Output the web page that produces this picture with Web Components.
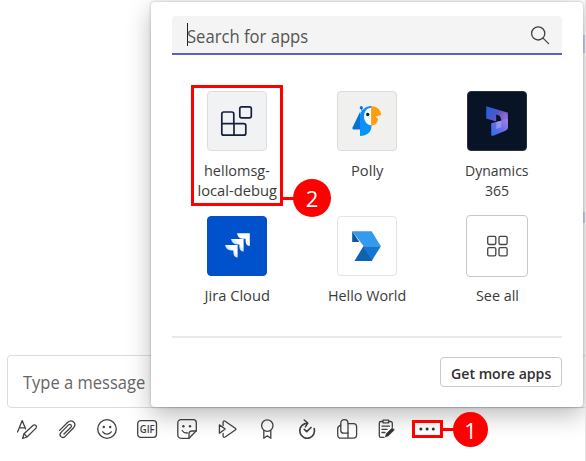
<!DOCTYPE html>
<html lang="en">
<head>
<meta charset="utf-8">
<title>Message extensions</title>
<style>
html,body{margin:0;width:586px;height:461px;overflow:hidden;background:#fff;font-family:"Open Sans","Noto Sans",sans-serif;color:#333}
</style>
</head>
<body>
<teams-window></teams-window>
<script>
const define = (name, html, ready) => customElements.define(name, class extends HTMLElement {
  constructor() {
    super();
    const t = document.createElement('template');
    t.innerHTML = html;
    this.attachShadow({mode: 'open'}).append(t.content.cloneNode(true));
  }
  connectedCallback() { if (ready) ready.call(this, this.shadowRoot); }
});

/* One line of text condensed or widened to the width in the w attribute. */
define('fit-text', `<style>
:host{display:block;white-space:nowrap;flex:none}
span{display:inline-block;transform-origin:0 50%}
</style><span><slot></slot></span>`, function (r) {
  const w = +this.getAttribute('w'), s = r.querySelector('span');
  this.style.width = w + 'px';
  s.style.transform = `scaleX(${w / s.offsetWidth})`;
});

const icons = {
  format: `<path d="M.6 13 5.2 1.6 8.6 10M2.3 8.8h5.2" /><path d="M5.6 19.5 7 14.8 16.2 6.3c2-1.3 4.2.8 2.8 2.8L10 18Z"/><path d="m7.3 15 2.4 2.6"/>`,
  clip: `<path d="M2.6 11.4 10.8 3.2c4-3.6 9.4 1.4 5.8 5.5l-8.5 8.7c-3 2.7-6.7-.8-4.2-3.8l7.6-7.7c1.8-1.5 4 .6 2.4 2.4L7 15"/>`,
  smile: `<circle cx="10" cy="10" r="9.3"/><g fill="#424242" stroke="none"><circle cx="6.8" cy="8" r="1.2"/><circle cx="13.2" cy="8" r="1.2"/></g><path d="M5.8 12.8c2.2 3 6.2 3 8.4 0"/>`,
  gif: `<rect x=".7" y="1.7" width="18.8" height="16.6" rx="3"/><text x="10.2" y="14" text-anchor="middle" textLength="15" lengthAdjust="spacingAndGlyphs" font-size="10.5" font-weight="600" fill="#424242" stroke="none">GIF</text>`,
  sticker: `<path d="M4 .7h12.3a3 3 0 0 1 3 3v8.1L12 19.3H4a3.2 3.2 0 0 1-3.2-3.2V4A3.2 3.2 0 0 1 4 .7Z"/><path d="M19.2 12h-4.5a2.7 2.7 0 0 0-2.7 2.7v4.5M5.2 11.5c1.2 2 3 2.8 5.3 2.4"/><g fill="#424242" stroke="none"><circle cx="6.4" cy="7.2" r="1.2"/><circle cx="13" cy="7.2" r="1.2"/></g>`,
  stream: `<path d="M6.1 3.2c0-1.2 1-1.6 2-1l10.2 7q1.3.9 0 1.8l-10.2 7c-1 .6-2 .2-2-1v-2.7M6.1 3.2v3.3"/><path d="M2.4 5.9 8.2 10l-5.8 4.2Z"/>`,
  praise: `<circle cx="10.3" cy="6.6" r="5.7"/><path d="M6.8 11.5v7.8l3.5-2.5 3.5 2.5v-7.8"/>`,
  update: `<path stroke-width="1.7" d="M15.6 6.4A7.2 7.2 0 1 0 17 11M2.8 11A7.2 7.2 0 0 1 8 4" stroke="none"/><path stroke-width="1.7" d="M17.2 9.6A7.4 7.4 0 1 1 7.5 4.9L9.6 4.3"/><path stroke-width="1.5" d="m7.2 1 3.6 3-2.4 3.9"/><path stroke-width="1.7" d="m7.3 10.4 2.4 2.2 4.3-4.1"/>`,
  viva: `<path d="M3.8 5.4v-1C3.8-.6 11 -.6 11 4.4v9.8H6.7c-1.9 0-2.9-1-2.9-2.8Z"/><path d="M3.8 6.2C1.6 7 .7 7.9.7 9.7v6c0 2.4 1 3.5 3.4 3.5h12.1c2.3 0 3.4-1.1 3.4-3.4V7.7c0-2.1-1-3.1-3.1-3.1H11M11 14v5.2"/>`,
  approvals: `<path d="M5.8 2.5H4A1.7 1.7 0 0 0 2.3 4.2v12.5A1.7 1.7 0 0 0 4 18.4h3M11.8 2.5h1.8a1.7 1.7 0 0 1 1.7 1.7v4M6 1.2h5.6v2.6H6ZM5 7.2h7.4M5 10.4h5M5 13.5h3"/><path fill="#333" stroke-width=".8" d="m8.5 17.6.9-3 5.9-5.7 2 2-5.9 5.8Z"/>`,
  more: `<g fill="#333" stroke="none"><circle cx="3.9" cy="10" r="1.5"/><circle cx="10.1" cy="10" r="1.5"/><circle cx="16.3" cy="10" r="1.5"/></g>`,
  search: `<circle cx="8.2" cy="8.4" r="6.6"/><path d="m13 13.1 5.6 5.5"/>`
};
icons.update = icons.update.slice(icons.update.indexOf('/>') + 2);
define('line-icon', `<style>
:host{display:block;width:20px;height:20px}
svg{display:block;overflow:visible;fill:none;stroke:#424242;stroke-width:1.3;stroke-linejoin:round;stroke-linecap:round}
</style><svg width="20" height="20" viewBox="0 0 20 20"></svg>`, function (r) {
  r.querySelector('svg').innerHTML = icons[this.getAttribute('name')];
});

define('search-field', `<style>
:host{display:flex;flex:none;align-items:center;box-sizing:border-box;height:39px;padding:3px 12px 0 15px;background:#f4f4f4;border-radius:4px 4px 0 0;border-bottom:2px solid #5b5fc7;color:#555;font-size:17.6px;line-height:24px}
i{width:1px;height:23px;background:#222;margin:-4px -1px 0 0}
line-icon{margin:-3px 0 0 auto}
</style><i></i><fit-text w="121"><slot></slot></fit-text><line-icon name="search"></line-icon>`);

define('app-tile', `<style>
:host{display:flex;flex-direction:column;align-items:center;height:125px;font-size:14.7px;line-height:20px;color:#3b3b3b}
div{box-sizing:border-box;width:60px;height:60px;border-radius:4px;border:1px solid var(--edge,transparent);background:var(--fill,#fff);display:flex;margin-bottom:9px}
:host([large]) div{width:62px;height:62px;margin:-1px 0 8px}
slot[name=art]::slotted(svg){display:block;margin:-1px;flex:none}
</style><div><slot name="art"></slot></div><slot></slot>`);

define('get-button', `<style>
:host{display:flex;flex:none;box-sizing:border-box;width:122px;height:30px;align-items:center;justify-content:center;border:1px solid #cacaca;border-radius:4px;font-size:14.7px;line-height:20px;font-weight:600;color:#303030;padding-top:1px}
</style><fit-text w="100"><slot></slot></fit-text>`);

define('app-flyout', `<style>
:host{display:flex;flex-direction:column;box-sizing:border-box;width:432px;height:405px;padding:14px 21px 20px;background:#fff;border-radius:4px;box-shadow:0 8px 24px rgba(0,0,0,.27),0 0 3px rgba(0,0,0,.25)}
section{display:grid;grid-template-columns:repeat(3,130px);height:240px;margin-top:36px}
hr{width:100%;height:2px;background:#e8e8e8;border:0;margin:auto 0 19px}
get-button{align-self:flex-end}
</style>
<search-field>Search for apps</search-field>
<section>
<app-tile style="--fill:#f1f2f4;--edge:#dedede"><svg slot="art" width="60" height="60" fill="none" stroke="#14213d" stroke-width="1.7"><path d="M16.8 21h8a2 2 0 0 1 2 2v9.7h10a2 2 0 0 1 2 2v7.5a2 2 0 0 1-2 2h-20a2 2 0 0 1-2-2V23a2 2 0 0 1 2-2ZM15 32.7h12v11.4"/><rect x="32.8" y="15.8" width="11.5" height="11" rx="1.8"/></svg><fit-text w="66">hellomsg-</fit-text><fit-text w="79">local-debug</fit-text></app-tile>
<app-tile style="--fill:#f0f0ef;--edge:#dcdcdc"><svg slot="art" width="60" height="60"><path fill="#0872d2" d="M23.2 20.5 15.3 37q0 1.5 1.5 1.6h8Z"/><path fill="#0b92fa" d="M23 45V23.5c2.4-6.4 7.2-8.5 11.5-8.5v20c0 5.8-4.5 10-11.5 10Z"/><circle cx="24.3" cy="16.7" r="1.6" fill="#0872d2"/><path d="m24.3 17 1 3.5" stroke="#0872d2"/><path fill="#fff" d="M34.5 16.8c-10 0-9.8 17.4 0 17.4Z"/><circle cx="30.7" cy="23.5" r="1.7" fill="#0b2037"/><path fill="#ff9d0b" d="M34.2 15.2c5.8-.3 9.3 3.7 10.2 8.8l-5.9 1.6 2.7 2.6-1.1 3.1c-1.2 2.2-3 3.1-5.9 3.2Z"/></svg><fit-text w="32">Polly</fit-text></app-tile>
<app-tile style="--fill:#081426;--edge:#293342"><svg slot="art" width="60" height="60"><defs><linearGradient id="a" x2="1" y2=".5"><stop stop-color="#1762df"/><stop offset=".6" stop-color="#5556c6"/><stop offset="1" stop-color="#9a6bd0"/></linearGradient><linearGradient id="b" x1="1" x2="0" y2="1"><stop stop-color="#9a86e8"/><stop offset=".5" stop-color="#696de6"/><stop offset="1" stop-color="#2370ed"/></linearGradient></defs><path fill="#4a4ab5" d="M33 23.5 41 21v16l-8 3Z"/><path fill="url(#a)" d="m19.2 15.2 18.5 5.5c2 .7 3 1.8 3 4v6.8L34.3 31c.3-4.3-1-5.7-3-6.4L29.4 24v6.6l-10.2-3Z"/><path fill="#081426" d="M29.4 23.5c3 1.2 5 2.7 4.7 7l-4.7 1Z"/><path fill="url(#b)" d="M24.2 32.2 41 28v7.8c0 2.3-1 3.5-3.2 4.3l-11.6 4.7c-1.3.4-2 0-2-1.3Z"/><path fill="#a8a1f3" opacity=".7" d="m29.3 31 4.9-1.2v6.5l-4.9 1.8Z"/></svg><fit-text w="64">Dynamics</fit-text><fit-text w="24">365</fit-text></app-tile>
<app-tile style="--fill:#0052cc;--edge:#0750bd"><svg slot="art" width="60" height="60"><defs><linearGradient id="j" x1="1" x2="0" y2="1"><stop offset=".35" stop-color="#fff"/><stop offset=".8" stop-color="#7fb0fa"/></linearGradient></defs><g fill="url(#j)"><path fill="#fff" d="M30 17.2h12.8V30c-3.1-.3-4.2-2.3-4.2-5.3v-2h-2.2c-3.5 0-5.8-1.8-6.4-5.5Z"/><path d="M24 23h12.6v12.6c-3.1-.3-4.2-2.2-4.2-5.2v-2h-2.2c-3.4 0-5.6-1.8-6.2-5.4Z"/><path d="M18 29h12.6v12.6c-3.1-.3-4.2-2.2-4.2-5.2v-2h-2.2c-3.4 0-5.6-1.8-6.2-5.4Z"/></g></svg><fit-text w="65">Jira Cloud</fit-text></app-tile>
<app-tile style="--edge:#e4e4e4"><svg slot="art" width="60" height="60"><path fill="#329bed" d="M15.2 15.2h19.4l9.3 15H26.7Z"/><path fill="#0a579e" d="M15.2 15.2 22.4 26h-7.2Z"/><path fill="#1476cf" d="M26.2 30.2h17.7L34.6 45Z"/><path fill="#0e62b2" d="m26.4 30.2 9 14.8H17.5Z"/></svg><fit-text w="78">Hello World</fit-text></app-tile>
<app-tile large style="--edge:#c8c8c8"><svg slot="art" width="62" height="62" fill="none" stroke="#444" stroke-width="1.3"><rect x="21.7" y="21.4" width="8.1" height="8.1" rx="1.4"/><rect x="33" y="21.4" width="8.1" height="8.1" rx="1.4"/><rect x="21.7" y="32.7" width="8.1" height="8.1" rx="1.4"/><rect x="33" y="32.7" width="8.1" height="8.1" rx="1.4"/></svg><fit-text w="43">See all</fit-text></app-tile>
</section>
<hr>
<get-button>Get more apps</get-button>`);

define('compose-box', `<style>
:host{display:flex;align-items:center;box-sizing:border-box;height:53px;margin:0 -4px 0 7px;padding-left:15px;border:1px solid #dcdcdc;border-radius:4px;font-size:17.6px;line-height:24px;color:#666}
</style><fit-text w="122"><slot></slot></fit-text>`);

define('compose-toolbar', `<style>
:host{display:flex;padding:11px 0 0 17px;gap:20px}
</style>${['format','clip','smile','gif','sticker','stream','praise','update','viva','approvals','more'].map(n => `<line-icon name="${n}"></line-icon>`).join('')}`);

/* Outlined target, connector and numbered disc. */
define('call-out', `<style>
:host{display:flex;align-items:flex-end;position:absolute}
b{box-sizing:border-box;width:var(--w);height:var(--h);border:3px solid #f00;margin-bottom:var(--b,0)}
i{width:12px;height:3px;background:#f00;margin:0 -2px var(--m) 0}
span{box-sizing:border-box;width:var(--d);height:var(--d);border-radius:50%;background:#f00;color:#fff;display:flex;align-items:center;justify-content:center;font-size:22px;line-height:1;margin-bottom:var(--s)}
</style><b></b><i></i><span><slot></slot></span>`);

define('teams-window', `<style>
:host{display:flex;flex-direction:column;justify-content:flex-end;position:relative;box-sizing:border-box;width:586px;height:461px;overflow:hidden;border-right:1px solid #e2e2e2}
compose-toolbar{height:42px}
app-flyout{position:absolute;left:151px;top:2px}
u{position:absolute;right:0;width:3px;background:#d5d8f5}
</style>
<u style="top:35px;height:18px"></u><u style="top:212px;height:11px"></u>
<compose-box>Type a message</compose-box>
<compose-toolbar></compose-toolbar>
<app-flyout></app-flyout>
<call-out style="left:191px;top:85px;--w:92px;--h:121px;--m:6px;--d:38px;--s:-11px">2</call-out>
<call-out style="left:412px;top:412px;--w:31px;--h:18px;--b:9px;--m:16px;--d:35px;--s:0px">1</call-out>`);
</script>
</body>
</html>
